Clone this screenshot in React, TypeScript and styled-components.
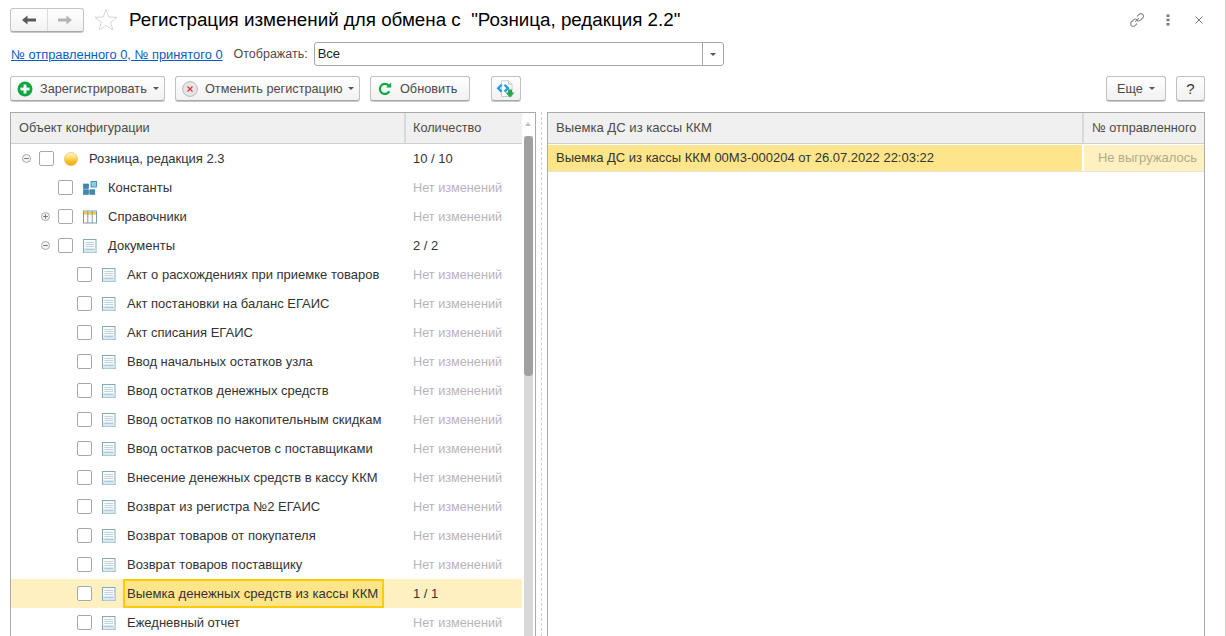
import React from "react";
import styled, { createGlobalStyle } from "styled-components";

const Global = createGlobalStyle`
  html, body { margin: 0; padding: 0; background: #fff; }
  #root { width: 1226px; height: 636px; overflow: hidden; }
`;

const Page = styled.div`
  box-sizing: border-box;
  width: 1226px;
  height: 636px;
  overflow: hidden;
  border-right: 1px solid #d8d2a0;
  background: #fff;
  font-family: "Liberation Sans", Arial, sans-serif;
  font-size: 13px;
  color: #333;
  display: flex;
  flex-direction: column;
  padding: 8px 20px 0 10px;
`;

const TitleBar = styled.header`
  display: flex;
  align-items: center;
  height: 24px;
`;

const NavGroup = styled.div`
  box-sizing: border-box;
  width: 74px;
  height: 24px;
  display: flex;
  border: 1px solid #c4c4c4;
  border-bottom-color: #a8a8a8;
  border-radius: 3px;
  background: linear-gradient(#ffffff, #f2f2f2);
  box-shadow: 0 1px 0 #c8c8c8;
`;

const NavPart = styled.div<{ $divided?: boolean }>`
  flex: 1;
  display: flex;
  align-items: center;
  justify-content: center;
  border-left: ${(p) => (p.$divided ? "1px solid #dcdcdc" : "none")};
`;

const StarWrap = styled.div`
  margin-left: 10px;
  width: 24px;
  height: 24px;
`;

const Title = styled.h1`
  margin: 0 0 0 11px;
  font-size: 18.8px;
  font-weight: 400;
  color: #000;
  white-space: pre;
`;

const WindowActions = styled.div`
  margin-left: auto;
  display: flex;
  align-items: center;
  gap: 15px;
  margin-right: -2px;
`;

const ActionIcon = styled.div`
  display: flex;
  align-items: center;
  justify-content: center;
  width: 16px;
  height: 16px;
`;

const FilterBar = styled.div`
  display: flex;
  align-items: center;
  height: 24px;
  margin-top: 10px;
  margin-left: 1px;
`;

const InfoLink = styled.a`
  color: #0b5cc4;
  font-size: 12.88px;
  text-decoration: underline;
  white-space: nowrap;
`;

const FilterLabel = styled.span`
  margin-left: 11px;
  font-size: 12.5px;
  color: #4b4b4b;
  white-space: nowrap;
`;

const SelectBox = styled.div`
  box-sizing: border-box;
  margin-left: 6px;
  width: 410px;
  height: 24px;
  display: flex;
  border: 1px solid #a8a8a8;
  border-radius: 3px;
  background: #fff;
`;

const SelectValue = styled.div`
  flex: 1;
  padding-left: 3px;
  line-height: 22px;
  color: #222;
`;

const SelectArrow = styled.div`
  width: 20px;
  border-left: 1px solid #a8a8a8;
  display: flex;
  align-items: center;
  justify-content: center;
`;

const Caret = styled.span`
  display: inline-block;
  width: 0;
  height: 0;
  border-left: 3px solid transparent;
  border-right: 3px solid transparent;
  border-top: 3px solid #555;
`;

const Toolbar = styled.div`
  display: flex;
  align-items: flex-start;
  margin-top: 10px;
  height: 25px;
`;

const Button = styled.div<{ $w: number; $ml?: number; $center?: boolean }>`
  box-sizing: border-box;
  width: ${(p) => p.$w}px;
  height: 25px;
  margin-left: ${(p) => p.$ml ?? 0}px;
  display: flex;
  align-items: center;
  justify-content: ${(p) => (p.$center ? "center" : "flex-start")};
  padding-left: ${(p) => (p.$center ? 0 : 6)}px;
  border: 1px solid #c0c0c0;
  border-bottom-color: #a8a8a8;
  border-radius: 3px;
  background: linear-gradient(#ffffff, #f1f1f1);
  box-shadow: 0 1px 0 #c8c8c8;
  color: #4b4b4b;
  font-size: 12.7px;
  white-space: nowrap;
`;

const ButtonIcon = styled.span`
  display: flex;
  align-items: center;
  justify-content: center;
  width: 16px;
  height: 16px;
  margin-right: 7px;
`;

const ButtonCaret = styled(Caret)`
  margin-left: 6px;
`;

const HelpMark = styled.span`
  font-size: 15px;
  color: #333;
`;

const Spacer = styled.div`
  flex: 1;
`;

const Panels = styled.div`
  display: flex;
  flex: 1;
  min-height: 0;
  margin-top: 11px;
`;

const Panel = styled.section<{ $w?: number }>`
  box-sizing: border-box;
  ${(p) => (p.$w ? `width: ${p.$w}px;` : "flex: 1;")}
  border: 1px solid #ababab;
  border-bottom: none;
  overflow: hidden;
  position: relative;
`;

const Splitter = styled.div`
  width: 11px;
  display: flex;
  justify-content: center;
  flex-shrink: 0;
  &::before {
    content: "";
    width: 0;
    height: 100%;
    border-left: 1px dashed #d0d0d0;
  }
`;

const TreeArea = styled.div`
  width: 511px;
`;

const HeaderRow = styled.div`
  display: flex;
  height: 30px;
  background: #f0f0f0;
  border-bottom: 1px solid #d0d0d0;
  box-sizing: content-box;
`;

const HeaderCell = styled.div<{ $w?: number; $pad?: number; $fs?: number }>`
  box-sizing: border-box;
  ${(p) => (p.$w ? `width: ${p.$w}px; flex-shrink: 0;` : "flex: 1;")}
  padding-left: ${(p) => p.$pad ?? 8}px;
  line-height: 30px;
  font-size: ${(p) => p.$fs ?? 12.72}px;
  color: #4b4b4b;
  white-space: nowrap;
  & + & {
    border-left: 2px solid #d9d9d9;
  }
`;

const TreeRow = styled.div<{ $selected?: boolean }>`
  display: flex;
  height: 29px;
  align-items: center;
  background: ${(p) => (p.$selected ? "#fef0c0" : "transparent")};
`;

const NameCell = styled.div<{ $level: number }>`
  width: 393px;
  height: 100%;
  flex-shrink: 0;
  display: flex;
  align-items: center;
  padding-left: ${(p) => 9 + p.$level * 19}px;
  box-sizing: border-box;
`;

const ToggleSlot = styled.div`
  width: 19px;
  display: flex;
  justify-content: flex-start;
  padding-left: 2px;
  box-sizing: border-box;
  flex-shrink: 0;
`;

const Check = styled.span`
  box-sizing: border-box;
  width: 15px;
  height: 15px;
  flex-shrink: 0;
  border: 1px solid #a8a8a8;
  border-radius: 2px;
  background: #fff;
`;

const NodeIcon = styled.span`
  display: flex;
  width: 14px;
  height: 14px;
  margin-left: 10px;
  flex-shrink: 0;
`;

const NodeLabel = styled.span<{ $focused?: boolean }>`
  box-sizing: border-box;
  white-space: nowrap;
  color: #333;
  ${(p) =>
    p.$focused
      ? `
    margin-left: 7px;
    width: 261px;
    height: 29px;
    line-height: 25px;
    padding-left: 2px;
    background: #ffe58a;
    border: 2px solid #ffcc00;
    font-size: 13.15px;
  `
      : "margin-left: 11px;"}
`;

const QtyCell = styled.div<{ $muted: boolean }>`
  flex: 1;
  padding-left: 9px;
  white-space: nowrap;
  font-size: ${(p) => (p.$muted ? "12.7px" : "13px")};
  color: ${(p) => (p.$muted ? "#b9b3ba" : "#333")};
`;

const ScrollTrack = styled.div`
  position: absolute;
  top: 0;
  right: 2px;
  bottom: 0;
  width: 9px;
  background: #d8d8d8;
  &::before {
    content: "";
    position: absolute;
    left: 0;
    right: 0;
    top: 0;
    height: 23px;
    background: #fff;
  }
`;

const ScrollArrow = styled.span`
  position: absolute;
  top: 9px;
  left: 1px;
  width: 0;
  height: 0;
  border-left: 3px solid transparent;
  border-right: 3px solid transparent;
  border-bottom: 4px solid #c0c0c0;
`;

const ScrollThumb = styled.div`
  position: absolute;
  top: 23px;
  left: 0;
  width: 9px;
  height: 240px;
  border-radius: 4px;
  background: #a0a0a0;
`;

const DocRow = styled.div`
  display: flex;
  height: 26px;
  margin-top: 1px;
  border-bottom: 1px solid #e4e4e4;
`;

const DocCell = styled.div<{ $w?: number; $muted?: boolean }>`
  box-sizing: border-box;
  ${(p) => (p.$w ? `width: ${p.$w}px; flex-shrink: 0;` : "flex: 1;")}
  line-height: 26px;
  padding-left: 8px;
  white-space: nowrap;
  background: ${(p) => (p.$muted ? "#fef0c0" : "#ffe58a")};
  color: ${(p) => (p.$muted ? "#b3ab8a" : "#333")};
  text-align: ${(p) => (p.$muted ? "right" : "left")};
  padding-right: ${(p) => (p.$muted ? 7 : 0)}px;
  & + & {
    border-left: 2px solid #fff;
  }
`;

const ArrowLeft = ({ c }: { c: string }) => (
  <svg width="16" height="12" viewBox="0 0 16 12">
    <path d="M1 6 L6.5 1.5 V4.5 H15 V7.5 H6.5 V10.5 Z" fill={c} />
  </svg>
);
const ArrowRight = ({ c }: { c: string }) => (
  <svg width="16" height="12" viewBox="0 0 16 12">
    <path d="M15 6 L9.5 1.5 V4.5 H1 V7.5 H9.5 V10.5 Z" fill={c} />
  </svg>
);
const Star = () => (
  <svg width="24" height="24" viewBox="0 0 24 24">
    <path
      d="M12 1.5 L14.8 9 L23 9.3 L16.6 14.3 L18.9 22 L12 17.6 L5.1 22 L7.4 14.3 L1 9.3 L9.2 9 Z"
      fill="#fff"
      stroke="#d4d8d4"
      strokeWidth="1"
    />
  </svg>
);
const LinkIcon = () => (
  <svg width="16" height="16" viewBox="0 0 16 16" fill="none" stroke="#8a8a8a" strokeWidth="1.1" strokeLinecap="round">
    <path d="M6.6 9.4 L9.6 6.4" />
    <path d="M8.2 4.2 L10 2.4 a2.5 2.5 0 0 1 3.6 3.6 L11.4 8.2 a2.5 2.5 0 0 1 -3.2 0.3" />
    <path d="M7.8 11.8 L6 13.6 a2.5 2.5 0 0 1 -3.6 -3.6 L4.6 7.8 a2.5 2.5 0 0 1 3.2 -0.3" />
  </svg>
);
const Dots = () => (
  <svg width="4" height="12" viewBox="0 0 4 12">
    <rect x="0.5" y="0.5" width="3" height="2.5" fill="#7a7a7a" />
    <rect x="0.5" y="4.7" width="3" height="2.5" fill="#7a7a7a" />
    <rect x="0.5" y="9" width="3" height="2.5" fill="#7a7a7a" />
  </svg>
);
const CloseIcon = () => (
  <svg width="8" height="8" viewBox="0 0 8 8" stroke="#777" strokeWidth="1">
    <path d="M0.5 0.5 L7.5 7.5 M7.5 0.5 L0.5 7.5" />
  </svg>
);
const PlusCircle = () => (
  <svg width="16" height="16" viewBox="0 0 16 16">
    <circle cx="8" cy="8" r="7.5" fill="#0aa83f" />
    <rect x="3.5" y="6.6" width="9" height="2.8" fill="#fff" />
    <rect x="6.6" y="3.5" width="2.8" height="9" fill="#fff" />
  </svg>
);
const CancelCircle = () => (
  <svg width="16" height="16" viewBox="0 0 16 16">
    <circle cx="8" cy="8" r="7.4" fill="#e6e6e6" stroke="#b9b9b9" />
    <path d="M5.5 5.5 L10.5 10.5 M10.5 5.5 L5.5 10.5" stroke="#e8252a" strokeWidth="1.1" />
  </svg>
);
const Refresh = () => (
  <svg width="14" height="14" viewBox="0 0 14 14" fill="none">
    <path d="M11.3 9.3 A5 5 0 1 1 10.6 3.6" stroke="#0aa83f" strokeWidth="2.2" />
    <path d="M8 5.6 L13.2 5.6 L13.2 0.6 Z" fill="#0aa83f" />
  </svg>
);
const ExportIcon = () => (
  <svg width="20" height="18" viewBox="0 0 20 18">
    <path d="M5.5 0.8 H12.5 L16 4.3 V16.5 H5.5 Z" fill="#fff" stroke="#c2ccd4" />
    <path d="M12.5 0.8 V4.3 H16" fill="#e8eef2" stroke="#c2ccd4" />
    <path d="M5.6 4.8 L2.2 8.2 L5.6 11.6" fill="none" stroke="#1d9be8" strokeWidth="2.3" />
    <path d="M8.6 4.8 L12 8.2 L8.6 11.6" fill="none" stroke="#1d9be8" strokeWidth="2.3" />
    <path d="M12 9.5 H16 V12.5 H18.5 L14 17.5 L9.5 12.5 H12 Z" fill="#22aa4a" />
  </svg>
);
const Toggle = ({ open }: { open: boolean }) => (
  <svg width="9" height="9" viewBox="0 0 9 9" fill="none" stroke="#a8a8a8">
    <circle cx="4.5" cy="4.5" r="4" fill="#f4f4f4" />
    <path d="M2.2 4.5 H6.8" stroke="#777" />
    {!open && <path d="M4.5 2.2 V6.8" stroke="#777" />}
  </svg>
);
const Ball = () => (
  <svg width="14" height="14" viewBox="0 0 14 14">
    <defs>
      <linearGradient id="ballFill" x1="0" y1="0" x2="0" y2="1">
        <stop offset="0" stopColor="#fff8d0" />
        <stop offset="0.35" stopColor="#fde27a" />
        <stop offset="0.65" stopColor="#f7c02c" />
        <stop offset="1" stopColor="#efa90a" />
      </linearGradient>
    </defs>
    <circle cx="7" cy="7" r="6.6" fill="url(#ballFill)" stroke="#e8c36a" strokeWidth="0.7" />
  </svg>
);
const ConstIcon = () => (
  <svg width="14" height="14" viewBox="0 0 14 14">
    <rect x="0.5" y="3" width="5" height="4.5" fill="#3b8ab8" stroke="#2a6f96" strokeWidth="0.6" />
    <rect x="0.5" y="8.8" width="5" height="4.5" fill="#3b8ab8" stroke="#2a6f96" strokeWidth="0.6" />
    <rect x="6.8" y="8.8" width="5" height="4.5" fill="#3b8ab8" stroke="#2a6f96" strokeWidth="0.6" />
    <rect x="8" y="0.5" width="5.5" height="5.5" fill="#8fcde6" stroke="#2f7eb0" strokeWidth="0.8" />
  </svg>
);
const CatalogIcon = () => (
  <svg width="14" height="14" viewBox="0 0 14 14">
    <rect x="0.5" y="1" width="13" height="12" fill="#fff" stroke="#7a9dac" />
    <rect x="1" y="2" width="12" height="2.6" fill="#f6c93c" />
    <path d="M4.8 1 V13 M9.2 1 V13" stroke="#7a9dac" />
  </svg>
);
const DocIcon = () => (
  <svg width="14" height="14" viewBox="0 0 14 14">
    <rect x="0.5" y="0.5" width="12.5" height="13" fill="#f8fbfc" stroke="#86aabb" />
    <path d="M2.5 3.5 H11 M2.5 5.5 H11 M2.5 7.5 H11" stroke="#c2d2da" />
    <rect x="1" y="9" width="11.5" height="4.5" fill="#d8e8f0" />
    <path d="M2.5 10.5 H11" stroke="#aecad9" />
  </svg>
);

type Node = {
  name: string;
  level: number;
  qty: string;
  icon: "ball" | "const" | "cat" | "doc";
  toggle?: "open" | "closed";
  selected?: boolean;
};

const NONE = "Нет изменений";
const doc = (name: string, qty = NONE, selected = false): Node => ({ name, level: 2, qty, icon: "doc", selected });

const nodes: Node[] = [
  { name: "Розница, редакция 2.3", level: 0, qty: "10 / 10", icon: "ball", toggle: "open" },
  { name: "Константы", level: 1, qty: NONE, icon: "const" },
  { name: "Справочники", level: 1, qty: NONE, icon: "cat", toggle: "closed" },
  { name: "Документы", level: 1, qty: "2 / 2", icon: "doc", toggle: "open" },
  doc("Акт о расхождениях при приемке товаров"),
  doc("Акт постановки на баланс ЕГАИС"),
  doc("Акт списания ЕГАИС"),
  doc("Ввод начальных остатков узла"),
  doc("Ввод остатков денежных средств"),
  doc("Ввод остатков по накопительным скидкам"),
  doc("Ввод остатков расчетов с поставщиками"),
  doc("Внесение денежных средств в кассу ККМ"),
  doc("Возврат из регистра №2 ЕГАИС"),
  doc("Возврат товаров от покупателя"),
  doc("Возврат товаров поставщику"),
  doc("Выемка денежных средств из кассы ККМ", "1 / 1", true),
  doc("Ежедневный отчет"),
];

const nodeIcon = (k: Node["icon"]) =>
  k === "ball" ? <Ball /> : k === "const" ? <ConstIcon /> : k === "cat" ? <CatalogIcon /> : <DocIcon />;

export default function App() {
  return (
    <Page>
      <Global />
      <TitleBar>
        <NavGroup>
          <NavPart>
            <ArrowLeft c="#5a5a5a" />
          </NavPart>
          <NavPart $divided>
            <ArrowRight c="#b4b4b4" />
          </NavPart>
        </NavGroup>
        <StarWrap>
          <Star />
        </StarWrap>
        <Title>Регистрация изменений для обмена с  "Розница, редакция 2.2"</Title>
        <WindowActions>
          <ActionIcon>
            <LinkIcon />
          </ActionIcon>
          <ActionIcon>
            <Dots />
          </ActionIcon>
          <ActionIcon>
            <CloseIcon />
          </ActionIcon>
        </WindowActions>
      </TitleBar>

      <FilterBar>
        <InfoLink>№ отправленного 0, № принятого 0</InfoLink>
        <FilterLabel>Отображать:</FilterLabel>
        <SelectBox>
          <SelectValue>Все</SelectValue>
          <SelectArrow>
            <Caret />
          </SelectArrow>
        </SelectBox>
      </FilterBar>

      <Toolbar>
        <Button $w={155}>
          <ButtonIcon>
            <PlusCircle />
          </ButtonIcon>
          Зарегистрировать
          <ButtonCaret />
        </Button>
        <Button $w={185} $ml={10}>
          <ButtonIcon>
            <CancelCircle />
          </ButtonIcon>
          Отменить регистрацию
          <ButtonCaret />
        </Button>
        <Button $w={100} $ml={10}>
          <ButtonIcon>
            <Refresh />
          </ButtonIcon>
          Обновить
        </Button>
        <Button $w={30} $ml={21} $center>
          <ExportIcon />
        </Button>
        <Spacer />
        <Button $w={60} $center>
          Еще
          <ButtonCaret />
        </Button>
        <Button $w={29} $ml={10} $center>
          <HelpMark>?</HelpMark>
        </Button>
      </Toolbar>

      <Panels>
        <Panel $w={526}>
          <TreeArea>
            <HeaderRow>
              <HeaderCell $w={393}>Объект конфигурации</HeaderCell>
              <HeaderCell $pad={7}>Количество</HeaderCell>
            </HeaderRow>
            {nodes.map((n) => (
              <TreeRow key={n.name} $selected={n.selected}>
                <NameCell $level={n.level}>
                  <ToggleSlot>{n.toggle && <Toggle open={n.toggle === "open"} />}</ToggleSlot>
                  <Check />
                  <NodeIcon>{nodeIcon(n.icon)}</NodeIcon>
                  <NodeLabel $focused={n.selected}>{n.name}</NodeLabel>
                </NameCell>
                <QtyCell $muted={n.qty === NONE}>{n.qty}</QtyCell>
              </TreeRow>
            ))}
          </TreeArea>
          <ScrollTrack>
            <ScrollArrow />
            <ScrollThumb />
          </ScrollTrack>
        </Panel>
        <Splitter />
        <Panel>
          <HeaderRow>
            <HeaderCell $fs={13.1}>Выемка ДС из кассы ККМ</HeaderCell>
            <HeaderCell $w={122}>№ отправленного</HeaderCell>
          </HeaderRow>
          <DocRow>
            <DocCell>Выемка ДС из кассы ККМ 00М3-000204 от 26.07.2022 22:03:22</DocCell>
            <DocCell $w={122} $muted>
              Не выгружалось
            </DocCell>
          </DocRow>
        </Panel>
      </Panels>
    </Page>
  );
}
